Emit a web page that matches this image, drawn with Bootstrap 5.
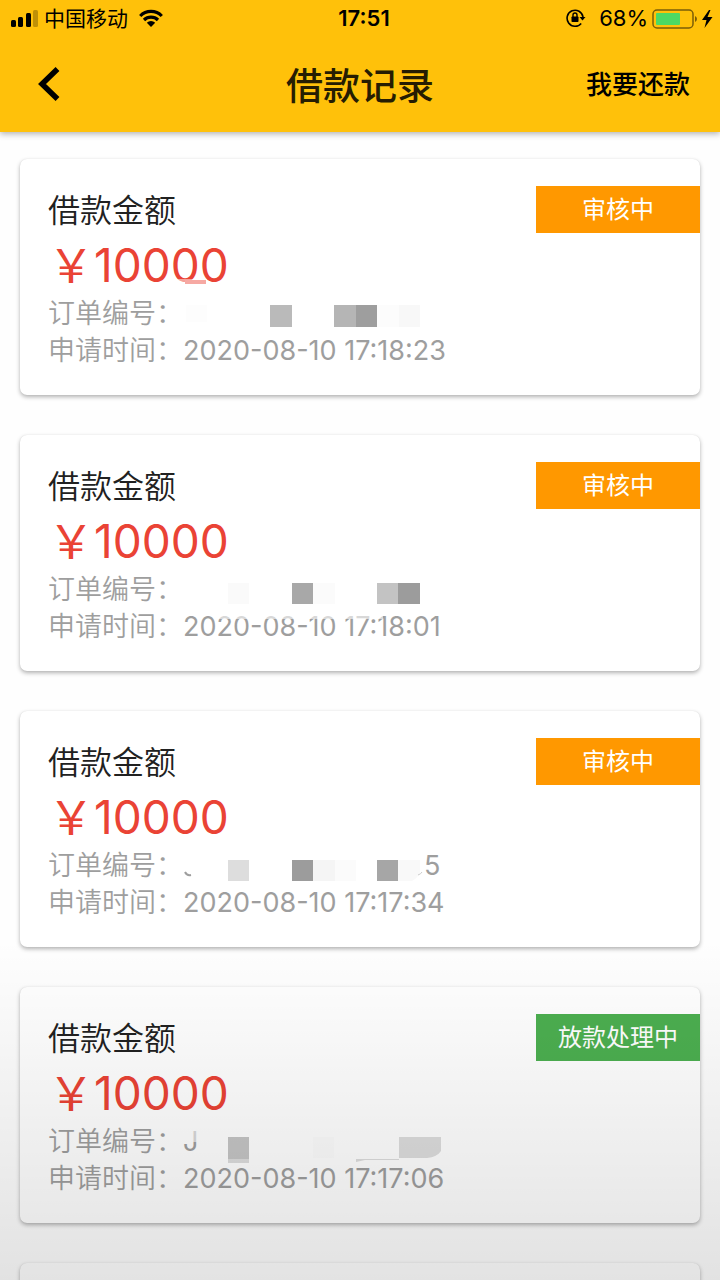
<!DOCTYPE html>
<html lang="zh-CN">
<head>
<meta charset="utf-8">
<meta name="viewport" content="width=device-width, initial-scale=1">
<title>借款记录</title>
<link href="https://cdn.jsdelivr.net/npm/bootstrap@5.3.0/dist/css/bootstrap.min.css" rel="stylesheet">
<style>
  body { font-family: Inter, "Noto Sans CJK SC", sans-serif; background: #fefefe; color: #212121; }
  .app-header { background: #ffc10a; color: #000; box-shadow: 0 2px 6px rgba(0,0,0,.3); z-index: 2; }
  .status-bar { height: 37px; padding: 0 0 0 10px; font-size: 21px; line-height: 37px; }
  .status-clock { font-weight: 600; font-size: 22px; }
  .battery-level { font-size: 22px; }
  .title-bar { height: 95px; padding: 0 30px; }
  .title-bar .side { flex: 1 1 0; }
  .title-bar h1 { font-size: 37px; line-height: 48px; font-weight: 500; color: #261d02; }
  .repay-link { font-size: 26px; line-height: 40px; font-weight: 500; color: #000; }
  .record-list { padding: 27px 20px; gap: 40px; }
  .record { border: 0; border-radius: 7px; background: #fff; padding: 27px 0 26px 28px; box-shadow: 0 2px 4px rgba(0,0,0,.3), 0 0 1px rgba(0,0,0,.1); }
  .record h2 { font-size: 32px; line-height: 50px; font-weight: 350; }
  .ribbon { width: 164px; height: 47px; font-size: 24px; line-height: 48px; color: #fff; }
  .ribbon-review { background: #ff9800; }
  .ribbon-paying { background: #4caf50; }
  .amount { font-size: 46px; line-height: 59px; color: #ea4335; }
  .meta { font-size: 27px; line-height: 37px; color: #9e9e9e; }
  .meta dt { font-weight: 350; }
  .meta .entry { height: 37px; }
  .mosaic { overflow: visible; }
  .bottom-shade { height: 340px; background: linear-gradient(rgba(0,0,0,0), rgba(0,0,0,.11)); z-index: 3; }
</style>
</head>
<body>
<div class="vh-100 d-flex flex-column position-relative overflow-hidden">
  <header class="app-header position-relative flex-shrink-0">
    <div class="status-bar d-flex align-items-center justify-content-between position-relative">
      <div class="d-flex align-items-center">
        <svg width="30" height="20" viewBox="0 0 30 20" aria-hidden="true"><rect x="1" y="11" width="5" height="7" rx="1.5"/><rect x="8" y="8" width="5" height="10" rx="1.5"/><rect x="16" y="4" width="5" height="14" rx="1.5"/><rect x="23" y="1" width="5" height="17" rx="1.5" opacity=".25"/></svg>
        <span class="ms-1">中国移动</span>
        <svg class="ms-2" width="30" height="20" viewBox="0 0 30 20" aria-hidden="true"><g fill="none" stroke="#000" stroke-width="3.2"><path d="M4.200 7a15 15 0 0 1 21.600 0"/><path d="M8 11a10 10 0 0 1 14 0"/></g><path d="M10.800 13.700a6 6 0 0 1 8.400 0L15 18z"/></svg>
      </div>
      <span class="status-clock position-absolute start-50 translate-middle-x ps-2">17:51</span>
      <div class="d-flex align-items-center">
        <svg width="22" height="20" viewBox="0 0 22 20" aria-hidden="true"><path d="M16.200 14.400A8 8 0 1 1 18 8" fill="none" stroke="#000" stroke-width="1.600"/><path d="M14.500 8h6L17.500 11.500z"/><rect x="6.500" y="7.500" width="7" height="5.500" rx=".8"/><path d="M8 8V6a2 2 0 0 1 4 0v2" fill="none" stroke="#000" stroke-width="1.400"/></svg>
        <span class="battery-level ms-2 ps-1">68%</span>
        <svg class="ms-1" width="68" height="22" viewBox="0 0 68 22" aria-hidden="true"><rect x="1" y="2" width="40" height="18" rx="4" fill="none" stroke="#7b5d08" stroke-width="1.500"/><rect x="4" y="5" width="24" height="12" rx="1" fill="#4cd964"/><path d="M43 8q2 1 2 3t-2 3z" fill="#7b5d08"/><path d="M57 2l-7 10h4.500l-2 8 8-11h-5l3-7z"/></svg>
      </div>
    </div>
    <nav class="title-bar d-flex align-items-center" aria-label="页面导航">
      <div class="side"><button type="button" class="btn border-0 p-0 ps-2 d-flex" aria-label="返回"><svg width="24" height="36" viewBox="0 0 24 36" aria-hidden="true"><path d="M19.500 2L4 17l15.500 15" fill="none" stroke="#000" stroke-width="5.500"/></svg></button></div>
      <h1 class="m-0 pt-1">借款记录</h1>
      <div class="side text-end"><a href="#repay" class="repay-link text-decoration-none">我要还款</a></div>
    </nav>
  </header>

  <main class="record-list d-flex flex-column">
    <article class="record card flex-shrink-0">
      <div class="d-flex justify-content-between align-items-start"><h2 class="m-0">借款金额</h2><span class="ribbon ribbon-review text-center">审核中</span></div>
      <div class="amount">￥10000</div>
      <dl class="meta m-0">
        <div class="entry d-flex"><dt>订单编号：</dt><dd class="m-0 d-flex">
          <svg class="mosaic position-relative" width="240" height="37" aria-hidden="true"><rect x="-10" y="-16" width="34" height="5" fill="#fff" opacity=".5"/><rect x="2" y="-15" width="21" height="4" fill="#f6a9a3"/><rect x="3" y="10" width="21" height="17" fill="#fdfdfd"/><rect x="87" y="10" width="22" height="22" fill="#bababa"/><rect x="151" y="10" width="22" height="22" fill="#b5b5b5"/><rect x="173" y="10" width="21" height="22" fill="#9e9e9e"/><rect x="194" y="10" width="22" height="22" fill="#fcfcfc"/><rect x="216" y="10" width="21" height="22" fill="#f8f8f8"/></svg></dd></div>
        <div class="entry d-flex"><dt>申请时间：</dt><dd class="m-0">2020-08-10 17:18:23</dd></div>
      </dl>
    </article>

    <article class="record card flex-shrink-0">
      <div class="d-flex justify-content-between align-items-start"><h2 class="m-0">借款金额</h2><span class="ribbon ribbon-review text-center">审核中</span></div>
      <div class="amount">￥10000</div>
      <dl class="meta m-0">
        <div class="entry d-flex"><dt>订单编号：</dt><dd class="m-0 d-flex">
          <svg class="mosaic position-relative" width="240" height="37" aria-hidden="true"><rect x="45" y="12" width="21" height="21" fill="#fafafa"/><rect x="109" y="12" width="21" height="21" fill="#a8a8a8"/><rect x="130" y="12" width="22" height="21" fill="#fbfbfb"/><rect x="194" y="12" width="21" height="21" fill="#c3c3c3"/><rect x="215" y="12" width="22" height="21" fill="#9c9c9c"/><rect x="32" y="43" width="168" height="5" fill="#fff" opacity=".6"/></svg></dd></div>
        <div class="entry d-flex"><dt>申请时间：</dt><dd class="m-0">2020-08-10 17:18:01</dd></div>
      </dl>
    </article>

    <article class="record card flex-shrink-0">
      <div class="d-flex justify-content-between align-items-start"><h2 class="m-0">借款金额</h2><span class="ribbon ribbon-review text-center">审核中</span></div>
      <div class="amount">￥10000</div>
      <dl class="meta m-0">
        <div class="entry d-flex"><dt>订单编号：</dt><dd class="m-0 d-flex">
          <svg class="mosaic" width="241" height="37" aria-hidden="true"><path d="M2 25q2 4 6 3" fill="none" stroke="#9e9e9e" stroke-width="2"/><rect x="45" y="13" width="21" height="21" fill="#ddd"/><rect x="109" y="13" width="21" height="21" fill="#9c9c9c"/><rect x="130" y="13" width="22" height="21" fill="#f5f5f5"/><rect x="152" y="13" width="21" height="21" fill="#fbfbfb"/><rect x="194" y="13" width="21" height="21" fill="#a6a6a6"/><path d="M215 13h22v12q-2 6-8 9h-14z" fill="#f9f9f9"/><path d="M235 28q3-1 4-3" fill="none" stroke="#ccc"/></svg>5</dd></div>
        <div class="entry d-flex"><dt>申请时间：</dt><dd class="m-0">2020-08-10 17:17:34</dd></div>
      </dl>
    </article>

    <article class="record card flex-shrink-0">
      <div class="d-flex justify-content-between align-items-start"><h2 class="m-0">借款金额</h2><span class="ribbon ribbon-paying text-center">放款处理中</span></div>
      <div class="amount">￥10000</div>
      <dl class="meta m-0">
        <div class="entry d-flex"><dt>订单编号：</dt><dd class="m-0 d-flex position-relative">J
          <svg class="mosaic position-absolute top-0 start-0" width="260" height="37" aria-hidden="true"><rect x="0" y="6" width="15" height="13" fill="#fff" opacity=".6"/><rect x="45" y="14" width="21" height="22" fill="#c5c5c5"/><rect x="45" y="36" width="21" height="4" fill="#ddd"/><rect x="130" y="14" width="21" height="21" fill="#fcfcfc"/><path d="M173 36h43v1h-34l-9 2z" fill="#ddd"/><path d="M216 14h42v14q-4 6-14 7h-28z" fill="#ddd"/></svg></dd></div>
        <div class="entry d-flex"><dt>申请时间：</dt><dd class="m-0">2020-08-10 17:17:06</dd></div>
      </dl>
    </article>

    <article class="record card flex-shrink-0" aria-label="更多记录"></article>
  </main>
  <div class="bottom-shade position-absolute bottom-0 start-0 w-100 pe-none"></div>
</div>
<script src="https://cdn.jsdelivr.net/npm/bootstrap@5.3.0/dist/js/bootstrap.bundle.min.js"></script>
</body>
</html>
